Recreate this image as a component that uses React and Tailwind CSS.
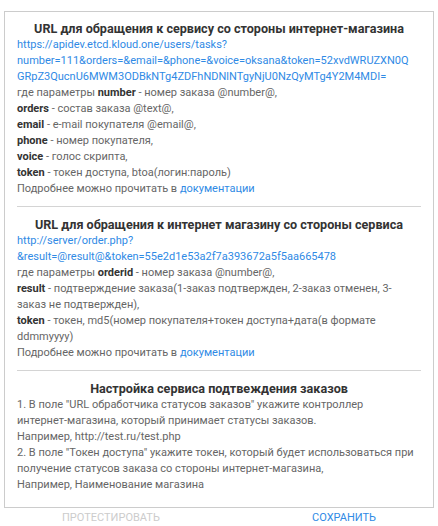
import React from "react";

const Link = ({ children }) => <span className="text-[#2f8ae5]">{children}</span>;
const B = ({ children }) => <b className="font-bold text-[#333]">{children}</b>;
const Title = ({ children }) => (
  <div className="text-center font-bold text-[12.6px] leading-[16px] text-[#333]">{children}</div>
);
const Hr = () => <hr className="border-0 border-t border-[#d4d4d4] mt-[9px] mb-[10px]" />;

export default function App() {
  return (
    <div className="w-[438px] h-[526px] bg-white text-[11px] leading-[16px] text-[#666]" style={{ fontFamily: 'Roboto, sans-serif' }}>
      <div className="pt-[11px] px-[4px]">
        <div className="border border-[#ccc] px-[12px] pt-[9px] pb-[14px]">
          <Title>URL для обращения к сервису со стороны интернет-магазина</Title>
          <div className="text-[#2f8ae5]">
            https://apidev.etcd.kloud.one/users/tasks?<br />
            number=111&amp;orders=&amp;email=&amp;phone=&amp;voice=oksana&amp;token=52xvdWRUZXN0Q<br />
            GRpZ3QucnU6MWM3ODBkNTg4ZDFhNDNlNTgyNjU0NzQyMTg4Y2M4MDI=
          </div>
          <div>где параметры <B>number</B> - номер заказа @number@,</div>
          <div><B>orders</B> - состав заказа @text@,</div>
          <div><B>email</B> - e-mail покупателя @email@,</div>
          <div><B>phone</B> - номер покупателя,</div>
          <div><B>voice</B> - голос скрипта,</div>
          <div><B>token</B> - токен доступа, btoa(логин:пароль)</div>
          <div>Подробнее можно прочитать в <Link>документации</Link></div>
          <Hr />
          <Title>URL для обращения к интернет магазину со стороны сервиса</Title>
          <div className="text-[#2f8ae5]">
            http://server/order.php?<br />
            &amp;result=@result@&amp;token=55e2d1e53a2f7a393672a5f5aa665478
          </div>
          <div>где параметры <B>orderid</B> - номер заказа @number@,</div>
          <div><B>result</B> - подтверждение заказа(1-заказ подтвержден, 2-заказ отменен, 3-<br />заказ не подтвержден),</div>
          <div><B>token</B> - токен, md5(номер покупателя+токен доступа+дата(в формате<br />ddmmyyyy)</div>
          <div>Подробнее можно прочитать в <Link>документации</Link></div>
          <Hr />
          <Title>Настройка сервиса подтвеждения заказов</Title>
          <div>1. В поле "URL обработчика статусов заказов" укажите контроллер<br />интернет-магазина, который принимает статусы заказов.</div>
          <div>Например, http://test.ru/test.php</div>
          <div className="whitespace-nowrap">2. В поле "Токен доступа" укажите токен, который будет использоваться при<br />получение статусов заказа со стороны интернет-магазина,</div>
          <div>Например, Наименование магазина</div>
        </div>
        <div className="flex justify-between pl-[58px] pr-[58px] pt-[2px]">
          <span className="text-[#ccc] text-[11px] leading-[16px]">ПРОТЕСТИРОВАТЬ</span>
          <span className="text-[#2f8ae5] text-[11px] leading-[16px]">СОХРАНИТЬ</span>
        </div>
      </div>
    </div>
  );
}
